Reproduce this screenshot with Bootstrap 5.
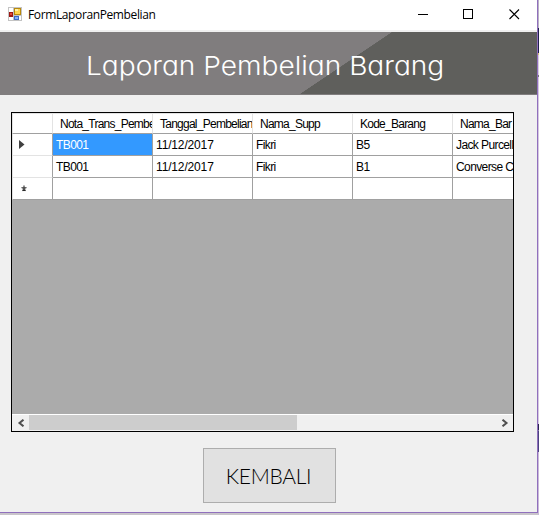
<!DOCTYPE html>
<html lang="id">
<head>
<meta charset="utf-8">
<title>FormLaporanPembelian</title>
<link rel="stylesheet" href="https://cdn.jsdelivr.net/npm/bootstrap@5.3.0/dist/css/bootstrap.min.css">
<style>
html,body{height:100%}
body{background:#c9c5ca;overflow:hidden;font-family:"Liberation Sans",Arial,sans-serif;color:#000}
.desktop{width:539px;height:515px}
.win{width:538px;height:513px;background:#f0f0f0;border-right:1px solid #9070bd;border-bottom:1px solid #9070bd}
.behind{width:1px;height:515px;background:linear-gradient(#b9b1c4 0 28px,#20204f 28px 53px,#d9c27a 53px 55px,#d8cfe0 55px 75px,#77737c 75px 77px,#d5c9e0 77px 424px,#292452 424px 430px,#8078a0 430px 431px,#4b4380 431px 452px,#c9bad8 452px)}
.titlebar{height:30px;font:12px "Open Sans","Noto Sans",sans-serif;padding:0 0 2px 8px}
.caption-text{font-size:12px;letter-spacing:-.38px;margin-left:6px;line-height:26px;padding-top:2px}
.winbtn{width:46px;height:28px;padding-left:1px}
.banner{height:63px;margin-top:2px;background:linear-gradient(#5f5f5c,#5f5f5c) 392px 0/146px 62px no-repeat,linear-gradient(to bottom right,#807d7e 49.8%,#5f5f5c 50.2%) 300px 0/92px 62px no-repeat,#807d7e}
.banner h1{font:300 26px "Inter",sans-serif;font-feature-settings:"cv11";margin:3px 0 0 86px;color:#fff;line-height:62px;white-space:nowrap;transform:scaleX(1.08);transform-origin:0 0}
.datagrid{width:503px;height:320px;margin:17px 0 0 11px;border:1px solid #000;background:#ababab}
.sheet{table-layout:fixed;width:541px;border-collapse:separate;border-spacing:0;font-size:12px;letter-spacing:-.6px;background:#fff;margin:0}
.sheet td,.sheet th{height:22px;padding:0 0 0 3px;border-right:1px solid #a0a0a0;border-bottom:1px solid #a0a0a0;white-space:nowrap;overflow:hidden;font-weight:400;line-height:20px;vertical-align:middle}
.sheet thead th{height:21px;padding:2px 1px 0 7px;border-right-color:#e3e3e3;line-height:17px;border-top:1px solid #e3e3e3;letter-spacing:-.75px}
.sheet tbody th{border-bottom-color:#e3e3e3;padding:0 0 0 6px}
.sheet thead th:first-child,.sheet tbody tr:last-child th{border-bottom-color:#a0a0a0}
.sheet th:first-child{border-left:1px solid #e3e3e3}
.sheet .picked{background:#3399ff;color:#fff}
.sheet .datecell{letter-spacing:-.15px}
.sheet svg{display:block}
.scroller{height:17px;border-top:1px solid #fff;background:#f0f0f0}
.arrowbox{width:17px;height:15px}
.thumb{width:268px;height:15px;background:#cdcdcd}
.back-btn{width:133px;height:55px;margin:16px 0 0 203px;background:#e1e1e1;border:1px solid #adadad;border-radius:0;font:300 21px "Lato",sans-serif;letter-spacing:-.3px;color:#000;padding:0 2px 1px 0}
</style>
</head>
<body>
<div class="desktop d-flex">
<main class="win flex-shrink-0">
  <header class="titlebar bg-white d-flex align-items-center">
    <svg width="14" height="14" shape-rendering="crispEdges"><path fill="#c3c3c3" d="M0 0h14v14H0z"/><path fill="#fff" d="M1 1h4v4H1zM1 10h4v3H1zM6 9h7v4H6z"/><path fill="#9c1915" d="M1 5h4v5H1z"/><path fill="#e34b37" d="M2 6h2v2H2z"/><path fill="#b88a0c" d="M6 1h7v7H6z"/><path fill="#ffd54d" d="M7 2h5v5H7z"/><path fill="#fff0a7" d="M7 2h3v2H7z"/><path fill="#3d6bc5" d="M6 9h5v4H6z"/><path fill="#84b2fc" d="M7 10h3v2H7z"/></svg>
    <span class="caption-text">FormLaporanPembelian</span>
    <div class="d-flex ms-auto">
      <div class="winbtn d-flex align-items-center justify-content-center"><svg width="11" height="11" shape-rendering="crispEdges"><path stroke="#000" d="M1 5.500h10"/></svg></div>
      <div class="winbtn d-flex align-items-center justify-content-center"><svg width="11" height="11" shape-rendering="crispEdges"><path fill="none" stroke="#000" d="M.5.5h9v9h-9z"/></svg></div>
      <div class="winbtn d-flex align-items-center justify-content-center"><svg width="11" height="11"><path stroke="#000" stroke-width="1.1" d="M.5.5l9.500 9.500M10 .5L.5 10"/></svg></div>
    </div>
  </header>
  <section class="banner overflow-hidden"><h1>Laporan Pembelian Barang</h1></section>
  <section class="datagrid d-flex flex-column justify-content-between overflow-hidden">
    <table class="sheet">
      <colgroup><col style="width:41px"><col><col><col><col><col></colgroup>
      <thead><tr><th></th><th>Nota_Trans_Pembelian</th><th>Tanggal_Pembelian</th><th>Nama_Supp</th><th>Kode_Barang</th><th>Nama_Bar</th></tr></thead>
      <tbody>
        <tr><th><svg width="6" height="9"><path fill="#404040" d="M0 0l5.500 4.500L0 9z"/></svg></th><td class="picked">TB001</td><td class="datecell">11/12/2017</td><td>Fikri</td><td>B5</td><td>Jack Purcell</td></tr>
        <tr><th></th><td>TB001</td><td class="datecell">11/12/2017</td><td>Fikri</td><td>B1</td><td>Converse Chuck</td></tr>
        <tr><th><svg width="10" height="7"><path stroke="#505050" stroke-width="1.300" d="M5 .5v3M2.500 2.500l2.500 1 2.500-1M3.500 6L5 3.500 6.500 6"/></svg></th><td></td><td></td><td></td><td></td><td></td></tr>
      </tbody>
    </table>
    <div class="scroller d-flex">
      <div class="arrowbox d-flex align-items-center justify-content-center"><svg width="8" height="8"><path fill="none" stroke="#505050" stroke-width="2" d="M6.500.7L2.500 4l4 3.300"/></svg></div>
      <div class="thumb"></div>
      <div class="arrowbox ms-auto d-flex align-items-center justify-content-center"><svg width="8" height="8"><path fill="none" stroke="#505050" stroke-width="2" d="M1.500.7l4 3.300-4 3.300"/></svg></div>
    </div>
  </section>
  <button class="btn back-btn" type="button">KEMBALI</button>
</main>
<div class="behind"></div>
</div>
<script src="https://cdn.jsdelivr.net/npm/bootstrap@5.3.0/dist/js/bootstrap.bundle.min.js"></script>
</body>
</html>
